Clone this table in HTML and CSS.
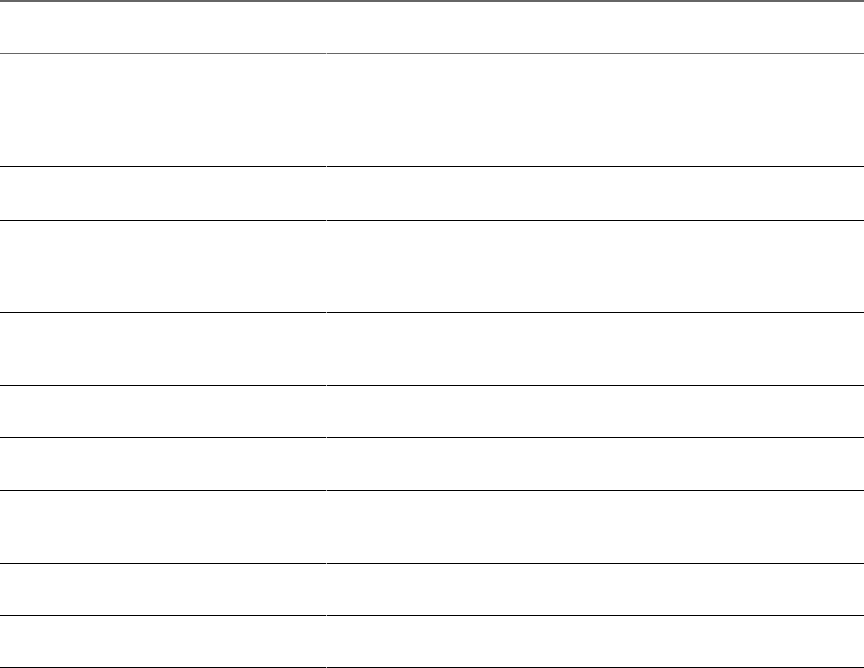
FILE: index.html
```html
<!DOCTYPE html>
<html>
<head>
<meta charset="utf-8">
<link rel="stylesheet" href="styles.css">
</head>
<body>
<div class="table">
  <div class="row head"><div class="cell"></div><div class="cell"></div></div>
  <div class="row h112"><div class="cell"></div><div class="cell"></div></div>
  <div class="row h53"><div class="cell"></div><div class="cell"></div></div>
  <div class="row h91"><div class="cell"></div><div class="cell"></div></div>
  <div class="row h72"><div class="cell"></div><div class="cell"></div></div>
  <div class="row h51"><div class="cell"></div><div class="cell"></div></div>
  <div class="row h52"><div class="cell"></div><div class="cell"></div></div>
  <div class="row h72"><div class="cell"></div><div class="cell"></div></div>
  <div class="row h51"><div class="cell"></div><div class="cell"></div></div>
  <div class="row h51"><div class="cell"></div><div class="cell"></div></div>
</div>
</body>
</html>
```
FILE: styles.css
```css
html, body {
  margin: 0;
  padding: 0;
  background: #fff;
  font-family: "Liberation Sans", Arial, sans-serif;
}
.table {
  display: flex;
  flex-direction: column;
  width: 864px;
}
.row {
  display: grid;
  grid-template-columns: 326px 1fr;
  column-gap: 1px;
  background: linear-gradient(to top, #aaa 1px, #fff 1px);
}
.cell {
  background: #fff;
  border-bottom: 1px solid #000;
}
.head {
  border-top: 2px solid #666;
  background: linear-gradient(to top, #bbb 1px, #fff 1px);
}
.head .cell {
  height: 51px;
  border-bottom-color: #666;
}
.h112 .cell { height: 112px; }
.h53 .cell { height: 53px; }
.h91 .cell { height: 91px; }
.h72 .cell { height: 72px; }
.h51 .cell { height: 51px; }
.h52 .cell { height: 52px; }
```
